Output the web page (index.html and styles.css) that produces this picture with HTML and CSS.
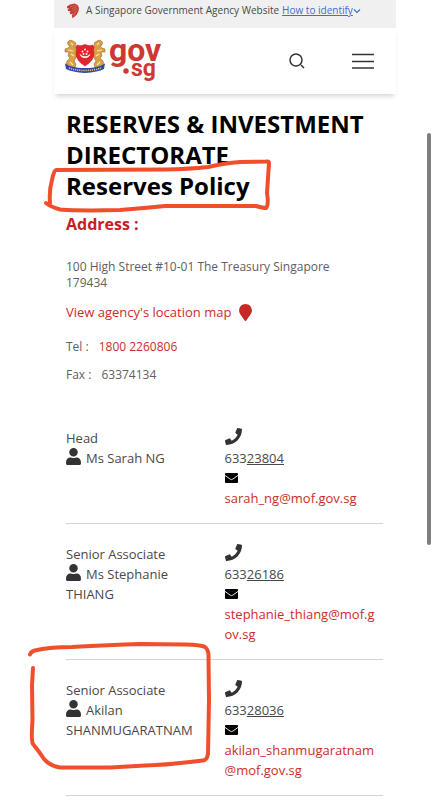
FILE: index.html
```html
<!DOCTYPE html>
<html lang="en">
<head>
<meta charset="utf-8">
<meta name="viewport" content="width=device-width, initial-scale=1">
<title>Reserves Policy</title>
<link rel="stylesheet" href="styles.css">
</head>
<body>
<svg class="sprite" aria-hidden="true">
  <symbol id="phone" viewBox="0 0 512 512"><path d="M493.4 24.6l-104-24c-11.3-2.6-22.9 3.3-27.5 13.9l-48 112c-4.2 9.8-1.4 21.3 6.9 28l60.6 49.6c-36 76.7-98.9 140.5-177.2 177.2l-49.6-60.6c-6.8-8.3-18.2-11.1-28-6.9l-112 48C3.9 366.5-2 378.1.6 389.4l24 104C27.1 504.2 36.7 512 48 512c256.1 0 464-207.5 464-464 0-11.2-7.7-20.9-18.6-23.4z"/></symbol>
  <symbol id="user" viewBox="0 0 448 512"><path d="M224 256c70.7 0 128-57.3 128-128S294.7 0 224 0 96 57.3 96 128s57.3 128 128 128zm89.6 32h-16.7c-22.2 10.2-46.9 16-72.9 16s-50.6-5.8-72.9-16h-16.7C60.2 288 0 348.2 0 422.4V464c0 26.5 21.5 48 48 48h352c26.5 0 48-21.5 48-48v-41.6c0-74.2-60.2-134.4-134.4-134.4z"/></symbol>
  <symbol id="mail" viewBox="0 0 13 10"><rect width="13" height="10" rx="1"/><path d="M0 2.4 5.3 6.2Q6.5 7 7.7 6.2L13 2.4" fill="none" stroke="#fff" stroke-width=".9"/></symbol>
</svg>
<div class="page">
  <div class="masthead">
    <svg class="lion" viewBox="0 0 14 16" aria-hidden="true">
      <path d="M1 3.600 4 1.400 8.500.6 11.600 2 13 5 12.400 8.500 10.500 12 6.500 15.200 5.800 12.600 7 10.600 4.600 11.400 3.600 9.400 4.800 8.200 2 8 1.800 6.400 3.400 5.400 1 5.200Z" fill="#c43a35"/>
      <path d="M4 3.800 8 2.600 11 4M5.500 5.800 9 4.600 11.800 6.500M6 8 9 6.600 11 9M8 9.500 9.500 9 8 13" fill="none" stroke="#e08c86" stroke-width=".5"/>
    </svg>
    <span>A Singapore Government Agency Website</span>
    <button class="identify" type="button"><span>How to identify</span><svg viewBox="0 0 8 6" aria-hidden="true"><path d="M1 1.500 4 4.500 7 1.500"/></svg></button>
  </div>
  <header class="header">
    <a class="brand" href="#" aria-label="gov.sg home">
      <svg viewBox="0 0 98 46">
        <g fill="#d9a044" stroke="#8a5a22" stroke-width=".5">
          <path d="M9 3 6 2 3.500 4 4 7 6 8 4 10 1 11 1 14 5 14 4 18 6 20 3 23 2 27 5 30 11 30 12 26 10 23 13 18 13 13 17 14 16 11 11 9 12 5Z"/>
          <path d="M33 3 36 2 38.500 4 38 7 36 8 38 10 41 11 41 14 37 14 38 18 36 20 39 23 40 27 37 30 31 30 30 26 32 23 29 18 29 13 25 14 26 11 31 9 30 5Z"/>
        </g>
        <path d="M7 5 9 7M4 12 9 13M7 16 10 18M6 24 9 27M35 5 33 7M38 12 33 13M35 16 32 18M36 24 33 27" stroke="#fae8b4" stroke-width="1.200" fill="none"/>
        <path d="M13 7Q17 8.500 21 6.500 25 8.500 29 7L30 9Q29 11 30 15 30 23 21 28 12 23 12 15 13 11 12 9Z" fill="#e3242b" stroke="#9c2020" stroke-width=".5"/>
        <path d="M16 16.500A5.500 5.500 0 0 0 26 16.500 6 5 0 0 1 16 16.500Z" fill="#fff" stroke="#fff" stroke-width=".7"/>
        <g fill="#fff"><circle cx="21" cy="11.500" r=".9"/><circle cx="18.500" cy="13.500" r=".9"/><circle cx="23.500" cy="13.500" r=".9"/><circle cx="19.500" cy="16" r=".9"/><circle cx="22.500" cy="16" r=".9"/></g>
        <path d="M1 25.500Q6 29 12 29.500 21 30.500 30 29.500 36 29 41 25.500L40 31Q34 34 21 35 8 34 2 31Z" fill="#3048a8"/>
        <path d="M5 30Q12 32.500 21 32.500T37 30" fill="none" stroke="#e3c875" stroke-width="1.500" stroke-dasharray="1.200 .9"/>
        <text class="gov" x="45" y="23">gov</text>
        <circle cx="62" cy="33" r="2.700" fill="#cf3732"/>
        <text class="sg" x="67" y="38">sg</text>
      </svg>
    </a>
    <div class="actions">
      <button type="button" aria-label="Search"><svg class="search" viewBox="0 0 16 16"><circle cx="7" cy="7" r="6"/><path d="M12 12 15 15"/></svg></button>
      <button type="button" aria-label="Menu"><svg class="menu" viewBox="0 0 22 16"><path d="M0 1.500H22M0 8.500H22M0 15H22"/></svg></button>
    </div>
  </header>
  <main>
    <h1>RESERVES &amp; INVESTMENT DIRECTORATE<br>Reserves Policy</h1>
    <h2>Address :</h2>
    <address>
      <p class="street">100 High Street #10-01 The Treasury Singapore 179434</p>
      <a class="map" href="#">View agency's location map<svg viewBox="0 0 384 512" aria-hidden="true"><path d="M172.268 501.670C26.970 291.031 0 269.413 0 192 0 85.961 85.961 0 192 0s192 85.961 192 192c0 77.413-26.970 99.031-172.268 309.670-9.535 13.774-29.930 13.773-39.464 0z"/></svg></a>
      <p class="line"><span>Tel :</span><a href="tel:18002260806">1800 2260806</a></p>
      <p class="line"><span>Fax :</span><span>63374134</span></p>
    </address>
    <table>
      <tbody>
        <tr>
          <td>Head<br><svg class="user"><use href="#user"/></svg>Ms Sarah NG</td>
          <td><svg class="phone"><use href="#phone"/></svg><span class="number">633<a href="tel:23804">23804</a></span><svg class="mail"><use href="#mail"/></svg><a class="email" href="mailto:sarah_ng@mof.gov.sg">sarah_ng@mof.gov.sg</a></td>
        </tr>
        <tr>
          <td>Senior Associate<br><svg class="user"><use href="#user"/></svg>Ms Stephanie THIANG</td>
          <td><svg class="phone"><use href="#phone"/></svg><span class="number">633<a href="tel:26186">26186</a></span><svg class="mail"><use href="#mail"/></svg><a class="email" href="mailto:stephanie_thiang@mof.gov.sg">stephanie_thiang@mof.gov.sg</a></td>
        </tr>
        <tr>
          <td>Senior Associate<br><svg class="user"><use href="#user"/></svg>Akilan SHANMUGARATNAM</td>
          <td><svg class="phone"><use href="#phone"/></svg><span class="number">633<a href="tel:28036">28036</a></span><svg class="mail"><use href="#mail"/></svg><a class="email" href="mailto:akilan_shanmugaratnam@mof.gov.sg">akilan_shanmugaratnam@mof.gov.sg</a></td>
        </tr>
      </tbody>
    </table>
  </main>
</div>
<svg class="marks" viewBox="0 0 434 800" aria-hidden="true">
  <path d="M46 203Q51 207 60 209.500Q80 211 120 210Q145 208 165 206L256 206Q263 208 266 208Q269 205 267 193L269 163Q269 161 266 161.500L240 162Q225 163 208 167Q190 169 165 169.500L56 170Q54 170 52 180Q49 190 50 203"/>
  <path d="M30 654.500Q31 651 37 650Q50 647 72 647Q110 645 140 644L185 644.500Q202 645 205 647Q209 650 208.500 658L209 700 208 754Q207 760 203 760.500L190 762Q165 765 145 765.500L110 767.500H60Q50 766 44 759Q38 750 33 744Q31 741 32.500 720L32 685 33 668"/>
</svg>
<div class="scroll-thumb"></div>
</body>
</html>
```
FILE: styles.css
```css
* { box-sizing: border-box; }
body {
  margin: 0;
  background: #fff;
  color: #484848;
  font: 13px/20px "Open Sans", "Noto Sans", sans-serif;
}
a { color: #cb2d29; text-decoration: none; }
button { padding: 0; border: 0; background: none; font: inherit; }
h1, h2, p { margin: 0; }
.sprite { position: absolute; width: 0; height: 0; }
.page { margin: 0 38px 0 54px; }

.masthead {
  display: flex;
  align-items: center;
  height: 28px;
  padding: 0 12px 8px;
  background: #f0f0f0;
  font-size: 10px;
  white-space: nowrap;
}
.lion { width: 14px; height: 16px; margin: 2px 6px 0 0; }
.identify { display: flex; align-items: center; margin-left: 3px; color: #4568dc; }
.identify span { text-decoration: underline; }
.identify svg { width: 8px; height: 6px; margin-top: 2px; fill: none; stroke: #4568dc; stroke-width: 1.2; }

.header {
  display: flex;
  align-items: center;
  justify-content: space-between;
  height: 66px;
  padding: 0 22px 0 10px;
  box-shadow: 0 4px 5px -2px rgba(0, 0, 0, .18);
}
.brand svg { display: block; width: 98px; height: 46px; overflow: visible; }
.gov, .sg { fill: #cf3732; font-family: Roboto, sans-serif; font-weight: 700; }
.gov { font-size: 32px; }
.sg { font-size: 23px; }
.actions { display: flex; align-items: center; gap: 47px; }
.actions svg { display: block; fill: none; stroke: #333; stroke-width: 1.5; }
.search { width: 16px; height: 16px; }
.menu { width: 22px; height: 16px; }

main { padding: 14px 13px 0 12px; }
h1 { color: #000; font-size: 24px; line-height: 31px; }
h2 { padding: 11px 0 9px; color: #c5221f; font-size: 16px; line-height: 24px; }
address { color: #606060; font-size: 12px; font-style: normal; }
.street { padding: 14px 20px 11px 0; line-height: 16px; }
.map { display: flex; align-items: center; gap: 8px; font-size: 13px; line-height: 20px; }
.map svg { width: 13px; height: 17px; fill: #c52a26; }
.line { display: flex; gap: 10px; padding-top: 8px; }
.map + .line { padding-top: 15px; }

table { width: 100%; margin-top: 23px; table-layout: fixed; border-collapse: collapse; }
td { padding: 20px 5px 15px 0; border-bottom: 1px solid #d4d4d4; vertical-align: top; }
td:first-child { padding-right: 24px; }
.user { width: 15px; height: 17px; margin-right: 5px; vertical-align: -2px; fill: #333; }
.phone { display: block; width: 17px; height: 17px; margin-bottom: 3px; fill: #333; }
.number { display: block; }
.number a { color: inherit; text-decoration: underline; }
.mail { display: block; width: 13px; height: 10px; margin: 5px 0; fill: #000; }
.email { display: block; word-break: break-all; }

.marks {
  position: absolute;
  top: 0;
  left: 0;
  width: 434px;
  height: 800px;
  fill: none;
  stroke: #f04e2c;
  stroke-width: 4;
  stroke-linecap: round;
  stroke-linejoin: round;
  pointer-events: none;
}
.scroll-thumb {
  position: absolute;
  top: 133px;
  right: 3px;
  width: 4px;
  height: 412px;
  border-radius: 2px;
  background: #7f7f7f;
}
```
